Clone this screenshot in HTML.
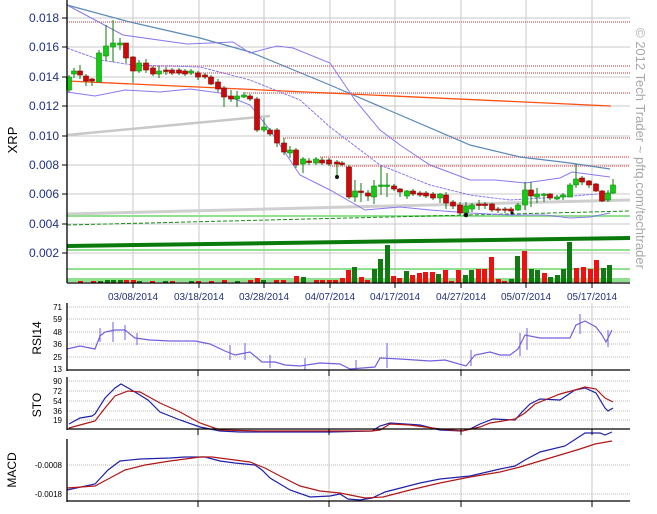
<!DOCTYPE html>
<html><head><meta charset="utf-8"><style>
html,body{margin:0;padding:0;background:#fff;width:657px;height:514px;overflow:hidden}
svg{display:block;font-family:"Liberation Sans",sans-serif}
</style></head><body>
<svg width="657" height="514" viewBox="0 0 657 514" xmlns="http://www.w3.org/2000/svg">
<!-- main grid -->
<g stroke="#c8c8c8" stroke-width="1">
<line x1="67" y1="18" x2="630" y2="18"/><line x1="67" y1="47" x2="630" y2="47"/><line x1="67" y1="77" x2="630" y2="77"/>
<line x1="67" y1="106" x2="630" y2="106"/><line x1="67" y1="136" x2="630" y2="136"/><line x1="67" y1="165" x2="630" y2="165"/>
<line x1="67" y1="194" x2="630" y2="194"/><line x1="67" y1="224" x2="630" y2="224"/><line x1="67" y1="253" x2="630" y2="253"/>
<line x1="133" y1="0" x2="133" y2="283"/><line x1="199" y1="0" x2="199" y2="283"/><line x1="264" y1="0" x2="264" y2="283"/>
<line x1="330" y1="0" x2="330" y2="283"/><line x1="395" y1="0" x2="395" y2="283"/><line x1="461" y1="0" x2="461" y2="283"/>
<line x1="526" y1="0" x2="526" y2="283"/><line x1="592" y1="0" x2="592" y2="283"/>
</g>
<!-- red dotted resistance lines -->
<g stroke="#f08080" stroke-width="2" stroke-dasharray="1 1" opacity="0.85">
<line x1="67" y1="22" x2="630" y2="22"/><line x1="133" y1="66" x2="630" y2="66"/><line x1="163" y1="73" x2="630" y2="73"/>
<line x1="245" y1="93" x2="630" y2="93"/><line x1="283" y1="138" x2="630" y2="138"/><line x1="320" y1="157" x2="630" y2="157"/>
<line x1="330" y1="166" x2="630" y2="166"/>
</g>
<!-- support lines -->
<line x1="67" y1="135" x2="270" y2="116" stroke="#c8c8c8" stroke-width="2.5"/>
<line x1="67" y1="214" x2="630" y2="200" stroke="#cfcfcf" stroke-width="3"/>
<g stroke="#90e090" stroke-width="2"><line x1="67" y1="216" x2="630" y2="216"/><line x1="67" y1="250" x2="630" y2="250"/><line x1="67" y1="269" x2="630" y2="269"/><line x1="67" y1="280" x2="630" y2="280" stroke-width="4"/></g>
<line x1="67" y1="225" x2="630" y2="211" stroke="#1a8a1a" stroke-width="1" stroke-dasharray="4 2"/>
<line x1="67" y1="246" x2="630" y2="238" stroke="#0a7a0a" stroke-width="4"/>
<!-- trend lines -->
<polyline fill="none" stroke="#5a8ab8" stroke-width="1.2" points="67,5 130,22 200,38 250,52 330,85 400,115 470,145 520,157 570,163 610,169"/>
<line x1="67" y1="81" x2="611" y2="106" stroke="#ff5010" stroke-width="1.3"/>
<g fill="none" stroke="#8878ee" stroke-width="1">
<polyline points="67,5 123,35 187,44 233,42 250,53 277,46 293,48 330,63 355,100 380,130 400,145 430,165 470,180 495,180 525,183 560,178 572,172 610,177"/>
<polyline points="67,48 100,60 133,65 200,67 250,80 300,100 330,127 380,165 430,185 470,195 510,200 560,197 610,193" stroke-dasharray="3 1"/>
<polyline points="67,92 95,96 125,90 160,92 190,89 220,93 250,105 270,130 300,175 330,190 365,210 400,207 430,210 470,213 510,215 545,215 570,218 590,217 610,213"/>
</g>
<!-- volume -->
<g>
<g fill="#ee1111"><rect x="78" y="281" width="5" height="2"/><rect x="91" y="281" width="5" height="2"/><rect x="124" y="280" width="5" height="3"/><rect x="131" y="280" width="5" height="3"/><rect x="150" y="281" width="5" height="2"/><rect x="170" y="281" width="5" height="2"/><rect x="196" y="281" width="5" height="2"/><rect x="209" y="281" width="5" height="2"/><rect x="222" y="280" width="5" height="3"/><rect x="248" y="280" width="5" height="3"/><rect x="255" y="278" width="5" height="5"/><rect x="274" y="280" width="5" height="3"/><rect x="281" y="280" width="5" height="3"/><rect x="294" y="276" width="5" height="7"/><rect x="314" y="280" width="5" height="3"/><rect x="320" y="280" width="5" height="3"/><rect x="327" y="280" width="5" height="3"/>
<rect x="333" y="280" width="5" height="3"/><rect x="340" y="278" width="5" height="5"/><rect x="346" y="270" width="5" height="13"/><rect x="359" y="277" width="5" height="6"/><rect x="365" y="280" width="5" height="3"/><rect x="391" y="276" width="5" height="7"/><rect x="397" y="278" width="5" height="5"/><rect x="410" y="275" width="5" height="8"/><rect x="417" y="273" width="5" height="10"/><rect x="423" y="272" width="5" height="11"/><rect x="430" y="272" width="5" height="11"/><rect x="443" y="270" width="5" height="13"/><rect x="449" y="281" width="5" height="2"/><rect x="456" y="270" width="5" height="13"/><rect x="476" y="269" width="5" height="14"/><rect x="482" y="269" width="5" height="14"/><rect x="489" y="257" width="5" height="26"/><rect x="496" y="279" width="5" height="4"/><rect x="502" y="281" width="5" height="2"/><rect x="522" y="251" width="5" height="32"/><rect x="542" y="273" width="5" height="10"/><rect x="574" y="268" width="5" height="15"/><rect x="581" y="267" width="5" height="16"/><rect x="588" y="269" width="5" height="14"/><rect x="594" y="260" width="5" height="23"/></g>
<g fill="#127a12"><rect x="98" y="281" width="5" height="2"/><rect x="105" y="280" width="5" height="3"/><rect x="111" y="280" width="5" height="3"/><rect x="118" y="280" width="5" height="3"/><rect x="137" y="281" width="5" height="2"/><rect x="163" y="281" width="5" height="2"/><rect x="189" y="281" width="5" height="2"/><rect x="235" y="281" width="5" height="2"/><rect x="261" y="280" width="5" height="3"/><rect x="301" y="277" width="5" height="6"/>
<rect x="352" y="267" width="5" height="16"/><rect x="372" y="269" width="5" height="14"/><rect x="378" y="259" width="5" height="24"/><rect x="385" y="245" width="5" height="38"/><rect x="404" y="271" width="5" height="12"/><rect x="436" y="274" width="5" height="9"/><rect x="463" y="275" width="5" height="8"/><rect x="469" y="270" width="5" height="13"/><rect x="509" y="279" width="5" height="4"/><rect x="515" y="256" width="5" height="27"/><rect x="529" y="269" width="5" height="14"/><rect x="535" y="270" width="5" height="13"/><rect x="548" y="277" width="5" height="6"/><rect x="555" y="275" width="5" height="8"/><rect x="561" y="269" width="5" height="14"/><rect x="567" y="242" width="5" height="41"/><rect x="601" y="268" width="5" height="15"/><rect x="607" y="265" width="5" height="18"/></g>
</g>
<!-- candles: wicks -->
<g stroke="#0a7a0a" stroke-width="1">
<line x1="69" y1="75" x2="69" y2="92"/><line x1="74" y1="68" x2="74" y2="78"/><line x1="80" y1="65" x2="80" y2="79"/><line x1="86" y1="74" x2="86" y2="86"/><line x1="92" y1="78" x2="92" y2="86"/><line x1="99" y1="50" x2="99" y2="82"/><line x1="106" y1="25" x2="106" y2="61"/><line x1="113" y1="20" x2="113" y2="62"/><line x1="120" y1="38" x2="120" y2="50"/><line x1="126" y1="43" x2="126" y2="63"/><line x1="133" y1="56" x2="133" y2="83"/><line x1="139" y1="60" x2="139" y2="73"/><line x1="146" y1="59" x2="146" y2="73"/><line x1="153" y1="66" x2="153" y2="76"/><line x1="159" y1="66" x2="159" y2="78"/><line x1="166" y1="67" x2="166" y2="75"/><line x1="172" y1="68" x2="172" y2="75"/><line x1="179" y1="68" x2="179" y2="75"/><line x1="185" y1="69" x2="185" y2="76"/><line x1="191" y1="69" x2="191" y2="75"/><line x1="198" y1="71" x2="198" y2="80"/><line x1="205" y1="73" x2="205" y2="79"/><line x1="211" y1="75" x2="211" y2="85"/><line x1="218" y1="79" x2="218" y2="92"/><line x1="224" y1="86" x2="224" y2="107"/><line x1="231" y1="90" x2="231" y2="102"/><line x1="237" y1="91" x2="237" y2="107"/><line x1="244" y1="92" x2="244" y2="98"/><line x1="250" y1="94" x2="250" y2="101"/><line x1="257" y1="97" x2="257" y2="132"/><line x1="264" y1="118" x2="264" y2="132"/><line x1="270" y1="128" x2="270" y2="136"/><line x1="277" y1="128" x2="277" y2="147"/><line x1="284" y1="138" x2="284" y2="155"/><line x1="290" y1="146" x2="290" y2="158"/><line x1="296" y1="148" x2="296" y2="168"/><line x1="303" y1="157" x2="303" y2="173"/><line x1="309" y1="158" x2="309" y2="165"/><line x1="316" y1="157" x2="316" y2="165"/><line x1="322" y1="157" x2="322" y2="165"/><line x1="329" y1="158" x2="329" y2="166"/>
<line x1="337" y1="160" x2="337" y2="177"/><line x1="342" y1="161" x2="342" y2="166"/><line x1="349" y1="165" x2="349" y2="199"/><line x1="355" y1="180" x2="355" y2="202"/><line x1="361" y1="183" x2="361" y2="202"/><line x1="368" y1="190" x2="368" y2="201"/><line x1="374" y1="180" x2="374" y2="204"/><line x1="381" y1="166" x2="381" y2="195"/><line x1="387" y1="173" x2="387" y2="197"/><line x1="394" y1="184" x2="394" y2="191"/><line x1="400" y1="188" x2="400" y2="197"/><line x1="407" y1="190" x2="407" y2="199"/><line x1="413" y1="189" x2="413" y2="196"/><line x1="420" y1="191" x2="420" y2="197"/><line x1="426" y1="191" x2="426" y2="198"/><line x1="433" y1="192" x2="433" y2="200"/><line x1="440" y1="193" x2="440" y2="203"/><line x1="446" y1="192" x2="446" y2="209"/><line x1="453" y1="200" x2="453" y2="209"/><line x1="460" y1="202" x2="460" y2="215"/><line x1="466" y1="202" x2="466" y2="217"/><line x1="472" y1="203" x2="472" y2="212"/><line x1="479" y1="200" x2="479" y2="210"/><line x1="485" y1="202" x2="485" y2="209"/><line x1="492" y1="203" x2="492" y2="212"/><line x1="498" y1="207" x2="498" y2="213"/><line x1="505" y1="207" x2="505" y2="213"/><line x1="511" y1="207" x2="511" y2="213"/><line x1="518" y1="203" x2="518" y2="211"/><line x1="525" y1="182" x2="525" y2="210"/><line x1="531" y1="182" x2="531" y2="207"/><line x1="537" y1="188" x2="537" y2="203"/><line x1="544" y1="193" x2="544" y2="202"/><line x1="550" y1="193" x2="550" y2="200"/><line x1="557" y1="195" x2="557" y2="200"/><line x1="563" y1="193" x2="563" y2="200"/><line x1="570" y1="183" x2="570" y2="197"/><line x1="576" y1="164" x2="576" y2="188"/><line x1="582" y1="176" x2="582" y2="185"/><line x1="589" y1="180" x2="589" y2="188"/><line x1="596" y1="183" x2="596" y2="192"/><line x1="602" y1="190" x2="602" y2="202"/><line x1="608" y1="190" x2="608" y2="202"/><line x1="613" y1="179" x2="613" y2="194"/>
</g>
<!-- green bodies -->
<g fill="#11cc11" stroke="#0a8a0a" stroke-width="0.6">
<rect x="66.5" y="77" width="5" height="13"/><rect x="71.5" y="71" width="5" height="3"/><rect x="96.5" y="53" width="5" height="29"/><rect x="103.5" y="46" width="5" height="10"/><rect x="110.5" y="43" width="5" height="4"/><rect x="117.5" y="43" width="5" height="2"/><rect x="136.5" y="63" width="5" height="8"/><rect x="156.5" y="71" width="5" height="3"/><rect x="188.5" y="71" width="5" height="2"/><rect x="234.5" y="96" width="5" height="3"/><rect x="241.5" y="95" width="5" height="2"/><rect x="261.5" y="127" width="5" height="3"/><rect x="287.5" y="150" width="5" height="3"/><rect x="300.5" y="159" width="5" height="5"/><rect x="313.5" y="159" width="5" height="4"/>
<rect x="352.5" y="191" width="5" height="6"/><rect x="371.5" y="186" width="5" height="11"/><rect x="378.5" y="185" width="5" height="1.5"/><rect x="384.5" y="185" width="5" height="1.5"/><rect x="404.5" y="191" width="5" height="5"/><rect x="437.5" y="194" width="5" height="4"/><rect x="463.5" y="206" width="5" height="7"/><rect x="469.5" y="205" width="5" height="4"/><rect x="515.5" y="205" width="5" height="5"/><rect x="522.5" y="190" width="5" height="15"/><rect x="534.5" y="194" width="5" height="3"/><rect x="541.5" y="194" width="5" height="1.5"/><rect x="554.5" y="197" width="5" height="2"/><rect x="560.5" y="195" width="5" height="2"/><rect x="567.5" y="185" width="5" height="12"/><rect x="573.5" y="179" width="5" height="6"/><rect x="605.5" y="193" width="5" height="7"/><rect x="610.5" y="185" width="5" height="8"/>
</g>
<!-- red bodies -->
<g fill="#cc0a0a" stroke="#880000" stroke-width="0.6">
<rect x="77.5" y="71" width="5" height="4"/><rect x="83.5" y="76" width="5" height="5"/><rect x="89.5" y="79" width="5" height="2"/><rect x="123.5" y="43" width="5" height="15"/><rect x="130.5" y="57" width="5" height="14"/><rect x="143.5" y="63" width="5" height="7"/><rect x="150.5" y="68" width="5" height="6"/><rect x="163.5" y="70" width="5" height="1.5"/><rect x="169.5" y="70" width="5" height="3"/><rect x="176.5" y="70" width="5" height="3"/><rect x="182.5" y="71" width="5" height="3"/><rect x="195.5" y="73" width="5" height="4"/><rect x="202.5" y="75" width="5" height="2"/><rect x="208.5" y="77" width="5" height="7"/><rect x="215.5" y="82" width="5" height="7"/><rect x="221.5" y="88" width="5" height="9"/><rect x="228.5" y="96" width="5" height="3"/><rect x="247.5" y="96" width="5" height="3"/><rect x="254.5" y="99" width="5" height="31"/><rect x="267.5" y="130" width="5" height="4"/><rect x="274.5" y="130" width="5" height="13"/><rect x="281.5" y="143" width="5" height="9"/><rect x="293.5" y="150" width="5" height="15"/><rect x="306.5" y="161" width="5" height="1.5"/><rect x="319.5" y="160" width="5" height="3"/><rect x="326.5" y="160" width="5" height="4"/>
<rect x="334.5" y="162" width="5" height="2"/><rect x="339.5" y="163" width="5" height="1.5"/><rect x="346.5" y="167" width="5" height="30"/><rect x="358.5" y="191" width="5" height="1.5"/><rect x="365.5" y="193" width="5" height="3"/><rect x="391.5" y="186" width="5" height="3"/><rect x="397.5" y="189" width="5" height="3"/><rect x="410.5" y="191" width="5" height="3"/><rect x="417.5" y="193" width="5" height="2"/><rect x="423.5" y="193" width="5" height="3"/><rect x="430.5" y="194" width="5" height="4"/><rect x="443.5" y="195" width="5" height="8"/><rect x="450.5" y="202" width="5" height="4"/><rect x="457.5" y="205" width="5" height="8"/><rect x="476.5" y="204" width="5" height="1.5"/><rect x="482.5" y="204" width="5" height="1.5"/><rect x="489.5" y="204" width="5" height="6"/><rect x="495.5" y="209" width="5" height="1.2"/><rect x="502.5" y="209" width="5" height="1.2"/><rect x="508.5" y="209" width="5" height="2"/><rect x="528.5" y="190" width="5" height="6"/><rect x="547.5" y="194" width="5" height="4"/><rect x="579.5" y="178" width="5" height="4"/><rect x="586.5" y="181" width="5" height="4"/><rect x="593.5" y="184" width="5" height="7"/><rect x="599.5" y="191" width="5" height="10"/>
</g>
<g fill="#111"><circle cx="337" cy="177" r="2"/><circle cx="466" cy="215" r="2.3"/><circle cx="512" cy="213" r="1.6"/></g>
<!-- axes main -->
<g stroke="#000" stroke-width="1.3"><line x1="67" y1="0" x2="67" y2="283"/><line x1="67" y1="283" x2="630" y2="283"/></g>
<g stroke="#000" stroke-width="1">
<line x1="62" y1="18" x2="67" y2="18"/><line x1="62" y1="47" x2="67" y2="47"/><line x1="62" y1="77" x2="67" y2="77"/><line x1="62" y1="106" x2="67" y2="106"/><line x1="62" y1="136" x2="67" y2="136"/><line x1="62" y1="165" x2="67" y2="165"/><line x1="62" y1="194" x2="67" y2="194"/><line x1="62" y1="224" x2="67" y2="224"/><line x1="62" y1="253" x2="67" y2="253"/>
<line x1="133" y1="283" x2="133" y2="288"/><line x1="199" y1="283" x2="199" y2="288"/><line x1="264" y1="283" x2="264" y2="288"/><line x1="330" y1="283" x2="330" y2="288"/><line x1="395" y1="283" x2="395" y2="288"/><line x1="461" y1="283" x2="461" y2="288"/><line x1="526" y1="283" x2="526" y2="288"/><line x1="592" y1="283" x2="592" y2="288"/>
</g>
<g font-size="12" fill="#203080" text-anchor="end">
<text x="59" y="22">0.018</text><text x="59" y="51">0.016</text><text x="59" y="81">0.014</text><text x="59" y="110">0.012</text><text x="59" y="140">0.010</text><text x="59" y="169">0.008</text><text x="59" y="198">0.006</text><text x="59" y="228">0.004</text><text x="59" y="257">0.002</text>
</g>
<text transform="translate(17,140) rotate(-90)" font-size="13" fill="#000" text-anchor="middle">XRP</text>
<g font-size="10" fill="#203080" text-anchor="middle">
<text x="133" y="300">03/08/2014</text><text x="199" y="300">03/18/2014</text><text x="264" y="300">03/28/2014</text><text x="330" y="300">04/07/2014</text><text x="395" y="300">04/17/2014</text><text x="461" y="300">04/27/2014</text><text x="526" y="300">05/07/2014</text><text x="592" y="300">05/17/2014</text>
</g>
<text transform="translate(636,28) rotate(90)" font-size="13" fill="#a8a8a8">© 2012 Tech Trader ~ pftq.com/techtrader</text>

<!-- RSI panel -->
<g stroke="#b8b8b8" stroke-dasharray="1 1"><line x1="67" y1="307" x2="630" y2="307"/><line x1="67" y1="319" x2="630" y2="319"/><line x1="67" y1="332" x2="630" y2="332"/><line x1="67" y1="344" x2="630" y2="344"/><line x1="67" y1="357" x2="630" y2="357"/></g>
<g stroke="#c8c8c8"><line x1="198" y1="303" x2="198" y2="501"/><line x1="329" y1="303" x2="329" y2="501"/><line x1="461" y1="303" x2="461" y2="501"/><line x1="592" y1="303" x2="592" y2="501"/></g>
<g stroke="#b8b8b8" stroke-dasharray="1 1"><line x1="67" y1="381" x2="630" y2="381"/><line x1="67" y1="391" x2="630" y2="391"/><line x1="67" y1="401" x2="630" y2="401"/><line x1="67" y1="411" x2="630" y2="411"/><line x1="67" y1="420" x2="630" y2="420"/><line x1="67" y1="465" x2="630" y2="465"/><line x1="67" y1="494" x2="630" y2="494"/></g>
<polyline fill="none" stroke="#7060dd" stroke-width="1.2" points="67,349 80,346 95,349 100,336 105,332 115,330 125,330 135,338 150,340 170,341 195,341 210,344 225,351 235,355 250,352 262,362 275,362 285,365 300,366 320,363 340,364 350,369 375,367 380,358 400,359 430,361 445,360 466,366 475,355 490,352 500,355 510,355 518,349 525,335 540,338 560,338 570,338 576,325 585,321 596,327 602,335 606,342 612,330"/>
<g stroke="#7060dd" stroke-width="1"><line x1="100" y1="328" x2="100" y2="342"/><line x1="113" y1="322" x2="113" y2="342"/><line x1="125" y1="325" x2="125" y2="340"/><line x1="137" y1="333" x2="137" y2="345"/><line x1="230" y1="345" x2="230" y2="360"/><line x1="245" y1="343" x2="245" y2="360"/><line x1="270" y1="355" x2="270" y2="368"/><line x1="305" y1="358" x2="305" y2="370"/><line x1="356" y1="360" x2="356" y2="370"/><line x1="387" y1="343" x2="387" y2="368"/><line x1="471" y1="350" x2="471" y2="366"/><line x1="520" y1="333" x2="520" y2="356"/><line x1="527" y1="328" x2="527" y2="350"/><line x1="580" y1="314" x2="580" y2="334"/><line x1="608" y1="330" x2="608" y2="347"/></g>
<!-- STO -->
<polyline fill="none" stroke="#2020aa" stroke-width="1.2" points="69,424 80,418 92,416 95,414 105,398 115,388 121,384 130,389 148,400 160,412 180,420 200,427 220,431 240,432 330,432 372,431 380,426 390,423 420,425 440,430 462,431 470,429 480,424 493,419 515,420 522,412 530,404 540,399 560,400 575,390 585,388 596,393 605,408 608,411 613,408"/>
<polyline fill="none" stroke="#b01818" stroke-width="1.2" points="69,428 80,425 95,421 105,408 115,396 128,391 140,392 160,403 180,412 200,423 220,430 260,431 372,431 380,430 390,424 410,425 440,429 462,431 480,427 490,423 515,419 525,413 535,404 560,394 575,390 585,387 596,389 605,398 613,402"/>
<!-- MACD -->
<polyline fill="none" stroke="#2020aa" stroke-width="1.2" points="67,490 95,484 108,470 120,461 140,459 170,458 185,457 205,457 220,461 235,463 255,465 262,470 270,478 290,490 310,497 330,496 340,494 348,499 360,500 372,498 385,492 420,483 440,479 470,476 500,469 515,466 525,460 540,452 565,446 585,433 600,433 605,435 612,432"/>
<polyline fill="none" stroke="#b01818" stroke-width="1.2" points="67,488 95,486 110,478 125,470 145,465 170,461 200,457 212,457 250,462 265,468 280,476 300,486 320,491 340,493 365,498 383,497 410,490 440,483 470,477 500,472 520,467 540,461 560,455 580,449 595,444 612,441"/>
<!-- sub axes -->
<g stroke="#000" stroke-width="1.3">
<line x1="67" y1="303" x2="67" y2="371"/><line x1="67" y1="370" x2="630" y2="370"/>
<line x1="67" y1="377" x2="67" y2="430"/><line x1="67" y1="429" x2="630" y2="429"/>
<line x1="67" y1="439" x2="67" y2="502"/><line x1="67" y1="501" x2="630" y2="501"/>
</g>
<g stroke="#000"><line x1="198" y1="370" x2="198" y2="376"/><line x1="329" y1="370" x2="329" y2="376"/><line x1="461" y1="370" x2="461" y2="376"/><line x1="592" y1="370" x2="592" y2="376"/><line x1="198" y1="429" x2="198" y2="435"/><line x1="329" y1="429" x2="329" y2="435"/><line x1="461" y1="429" x2="461" y2="435"/><line x1="592" y1="429" x2="592" y2="435"/><line x1="198" y1="501" x2="198" y2="507"/><line x1="329" y1="501" x2="329" y2="507"/><line x1="461" y1="501" x2="461" y2="507"/><line x1="592" y1="501" x2="592" y2="507"/></g>
<g font-size="8" fill="#000" text-anchor="end">
<text x="62" y="310">71</text><text x="62" y="322">59</text><text x="62" y="335">48</text><text x="62" y="347">36</text><text x="62" y="360">25</text><text x="62" y="372">13</text>
<text x="62" y="384">90</text><text x="62" y="394">72</text><text x="62" y="404">54</text><text x="62" y="414">36</text><text x="62" y="423">19</text>
<text x="62" y="468">-0.0008</text><text x="62" y="497">-0.0018</text>
</g>
<g font-size="12" fill="#000" text-anchor="middle">
<text transform="translate(41,338) rotate(-90)">RSI14</text>
<text transform="translate(41,405) rotate(-90)">STO</text>
<text transform="translate(16,470) rotate(-90)">MACD</text>
</g>
</svg>
</body></html>
